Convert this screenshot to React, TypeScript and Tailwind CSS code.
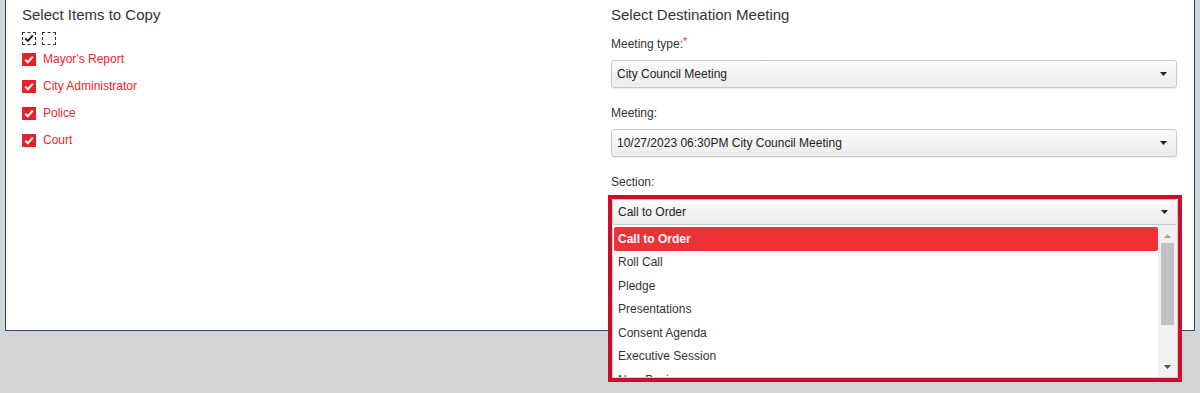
import React from "react";

const font = { fontFamily: '"Liberation Sans", Arial, sans-serif' };

function Arrow({ color = "#222" }: { color?: string }) {
  return (
    <svg width="7" height="4" viewBox="0 0 7 4" className="block">
      <path d="M0 0 H7 L3.5 4 Z" fill={color} />
    </svg>
  );
}

function Select({ value, h }: { value: string; h: string }) {
  return (
    <div
      className={`flex items-center justify-between ${h} rounded-[3px] border border-[#c9c9c9] bg-gradient-to-b from-[#fbfbfb] to-[#ececec] pl-[5px] pr-[9px] text-[12px] text-[#222] shadow-[0_1px_1px_rgba(0,0,0,0.08)]`}
    >
      <span>{value}</span>
      <Arrow />
    </div>
  );
}

function RedCheck() {
  return (
    <div className="flex h-[13px] w-[14px] items-center justify-center bg-[#e8202a]">
      <svg width="10" height="9" viewBox="0 0 10 9">
        <path d="M1.2 4.6 L3.8 7.2 L8.8 1.6" stroke="#fff" strokeWidth="2" fill="none" />
      </svg>
    </div>
  );
}

const items = ["Mayor's Report", "City Administrator", "Police", "Court"];
const options = [
  "Call to Order",
  "Roll Call",
  "Pledge",
  "Presentations",
  "Consent Agenda",
  "Executive Session",
  "New Business",
];

export default function App() {
  return (
    <div className="h-[393px] w-[1200px] overflow-hidden bg-[#d3d4d6]" style={font}>
      <div className="ml-[5px] flex h-[331px] w-[1190px] border-b border-l border-r border-[#2a4a8c] bg-white pl-[16px]">
        {/* Left column */}
        <div className="w-[589px] pt-[6px]">
          <div className="h-[18px] text-[15px] leading-[18px] text-[#333]">Select Items to Copy</div>
          <div className="mt-[8px] flex gap-[6px]">
            <div className="relative h-[13px] w-[14px] border border-dashed border-[#333]">
              <svg width="10" height="9" viewBox="0 0 10 9" className="absolute left-[1px] top-[1px]">
                <path d="M1.2 4.4 L3.8 7 L8.8 1.4" stroke="#111" strokeWidth="1.8" fill="none" />
              </svg>
            </div>
            <div className="h-[13px] w-[14px] border border-dashed border-[#333]" />
          </div>
          <div className="mt-[8px] flex flex-col gap-[14px]">
            {items.map((t) => (
              <div key={t} className="flex h-[13px] items-center gap-[7px]">
                <RedCheck />
                <span className="text-[12px] leading-[13px] text-[#e8262d]">{t}</span>
              </div>
            ))}
          </div>
        </div>

        {/* Right column */}
        <div className="w-[566px] pt-[6px]">
          <div className="h-[18px] text-[15px] leading-[18px] text-[#333]">Select Destination Meeting</div>
          <div className="mt-[13px] h-[14px] text-[12px] leading-[14px] text-[#333]">
            Meeting type:<span className="align-top text-[10px] leading-[10px] text-[#e8262d]">*</span>
          </div>
          <div className="mt-[9px]">
            <Select value="City Council Meeting" h="h-[28px]" />
          </div>
          <div className="mt-[18px] h-[14px] text-[12px] leading-[14px] text-[#333]">Meeting:</div>
          <div className="mt-[9px]">
            <Select value="10/27/2023 06:30PM City Council Meeting" h="h-[28px]" />
          </div>
          <div className="mt-[18px] h-[14px] text-[12px] leading-[14px] text-[#333]">Section:</div>
          <div className="relative z-10 mt-[6px] -ml-[3px] h-[187px] w-[574px] border-4 border-[#c8102e] bg-white">
            <Select value="Call to Order" h="h-[26px]" />
            <div className="flex h-[153px] border border-t-0 border-[#cfcfcf] bg-white">
              <div className="flex-1 overflow-hidden pl-[1px] pt-[2px]">
                {options.map((o, i) => (
                  <div
                    key={o}
                    className={
                      i === 0
                        ? "flex h-[23.5px] items-center rounded-[2px] bg-[#ee3135] pl-[4px] text-[12px] font-bold text-white"
                        : "flex h-[23.5px] items-center pl-[4px] text-[12px] text-[#333]"
                    }
                  >
                    {o}
                  </div>
                ))}
              </div>
              <div className="flex w-[19px] flex-col items-center bg-[#f0f0f0]">
                <div className="mt-[9px] h-[4px]">
                  <svg width="7" height="4" viewBox="0 0 7 4" className="block">
                    <path d="M0 4 H7 L3.5 0 Z" fill="#a3a3a3" />
                  </svg>
                </div>
                <div className="mt-[5px] h-[82px] w-[13px] bg-[#c1c1c1]" />
                <div className="mt-auto mb-[8px]">
                  <Arrow color="#505050" />
                </div>
              </div>
            </div>
          </div>
        </div>
      </div>
    </div>
  );
}
